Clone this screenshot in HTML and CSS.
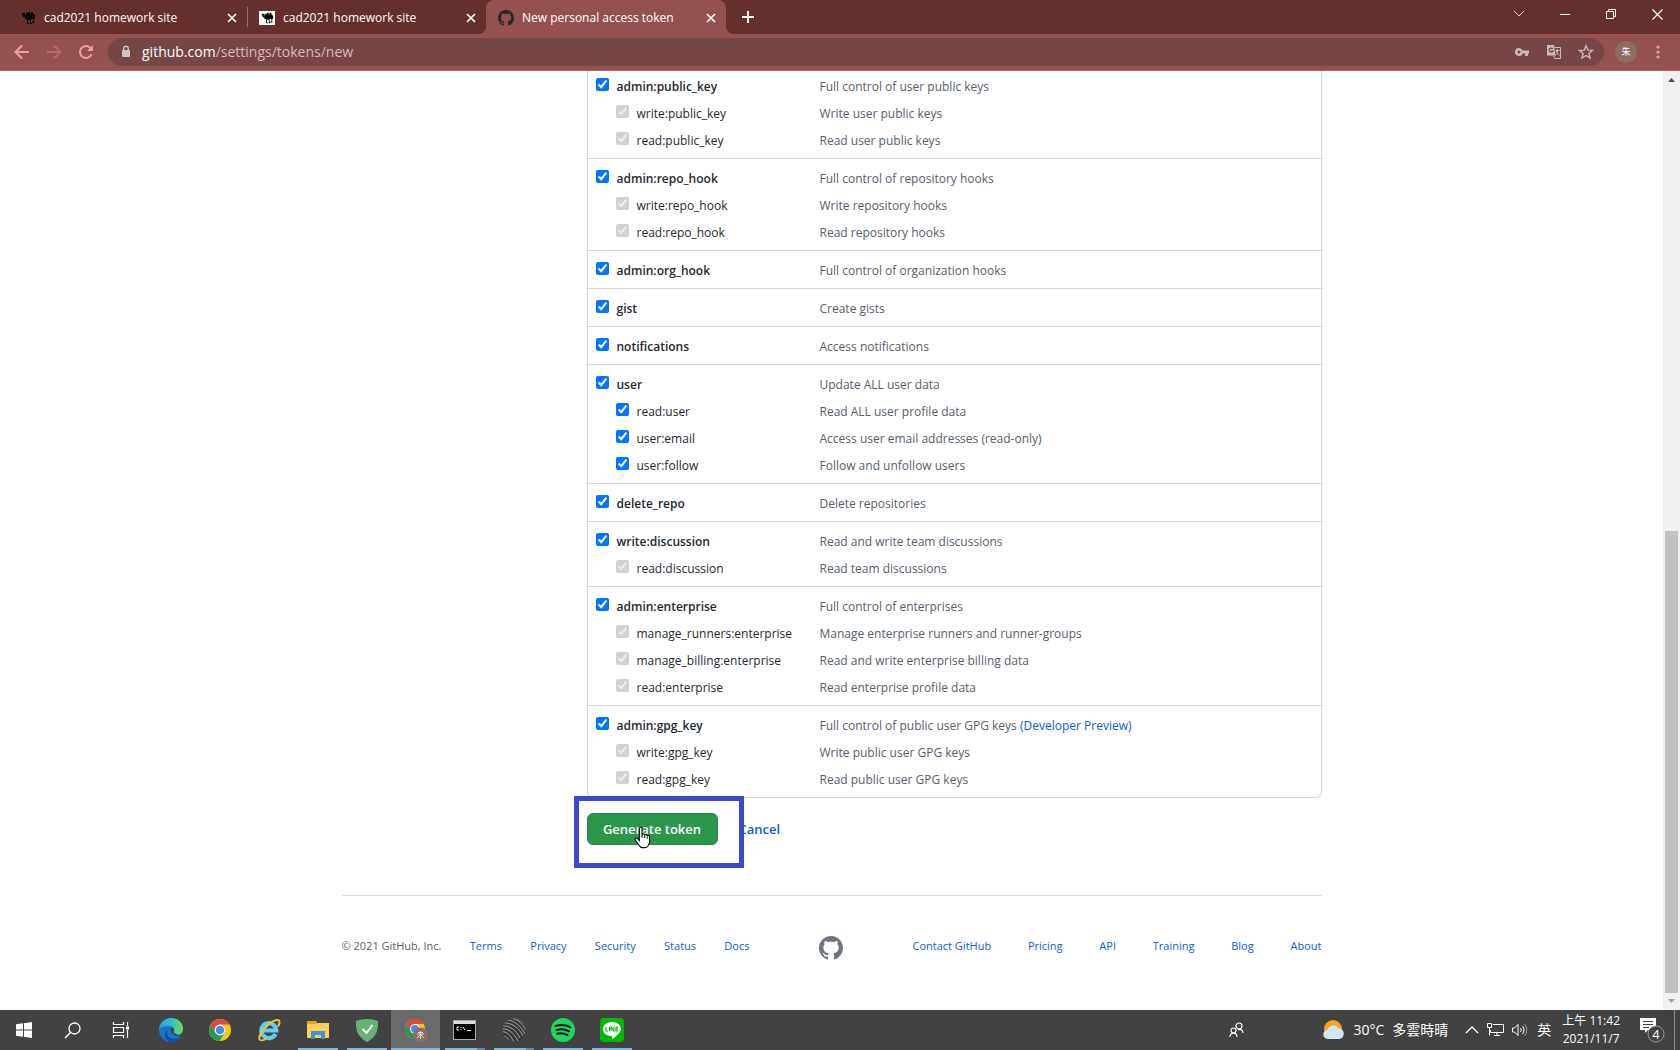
FILE: index.html
```html
<!DOCTYPE html>
<html lang="en">
<head>
<meta charset="utf-8">
<title>New personal access token</title>
<link rel="stylesheet" href="styles.css">
</head>
<body>
<svg class="defs" width="0" height="0" aria-hidden="true">
  <symbol id="octocat" viewBox="0 0 16 16"><path d="M8 0C3.58 0 0 3.58 0 8c0 3.54 2.29 6.53 5.47 7.59.4.07.55-.17.55-.38 0-.19-.01-.82-.01-1.49-2.01.37-2.53-.49-2.69-.94-.09-.23-.48-.94-.82-1.13-.28-.15-.68-.52-.01-.53.63-.01 1.08.58 1.23.82.72 1.21 1.87.87 2.33.66.07-.52.28-.87.51-1.07-1.78-.2-3.64-.89-3.64-3.95 0-.87.31-1.59.82-2.15-.08-.2-.36-1.02.08-2.12 0 0 .67-.21 2.2.82.64-.18 1.32-.27 2-.27s1.36.09 2 .27c1.53-1.04 2.2-.82 2.2-.82.44 1.1.16 1.92.08 2.12.51.56.82 1.27.82 2.15 0 3.07-1.87 3.75-3.65 3.95.29.25.54.73.54 1.48 0 1.07-.01 1.93-.01 2.2 0 .21.15.46.55.38A8.01 8.01 0 0 0 16 8c0-4.42-3.58-8-8-8z"/></symbol>
  <symbol id="camel" viewBox="0 0 16 16"><path d="M2 3h3v2h1V3h2V2h2v2h1V2h2v2h1v1h1v4h-1v4h-2v-1h1V9h-2v4h1v1h-2v-4H8v3h1v1H7V9H5V7H3V5H2z"/></symbol>
  <symbol id="close" viewBox="0 0 10 10"><path d="M1 1l8 8M9 1L1 9" stroke="currentColor" stroke-width="1.7" fill="none"/></symbol>
  <symbol id="chrome" viewBox="0 0 24 24"><circle cx="12" cy="12" r="11" fill="#fbc116"/><path d="M2.500 6.500A11 11 0 0 0 11.500 23L16.700 14.600 7.300 14.600z" fill="#1f9d58"/><path d="M2.500 6.500A11 11 0 0 1 21.600 6.600H12L7.300 14.600z" fill="#d94b3f"/><circle cx="12" cy="12" r="5.4" fill="#fff"/><circle cx="12" cy="12" r="4.3" fill="#4a8af4"/></symbol>
</svg>

<header class="browser">
  <div class="tab-strip">
    <div class="tab">
      <svg class="favicon" width="16" height="16"><use href="#camel"/></svg>
      <span class="tab-title">cad2021 homework site</span>
      <button class="tab-close" aria-label="Close tab"><svg width="10" height="10"><use href="#close"/></svg></button>
    </div>
    <div class="tab tab-divided">
      <svg class="favicon favicon-boxed" width="16" height="14"><use href="#camel"/></svg>
      <span class="tab-title">cad2021 homework site</span>
      <button class="tab-close" aria-label="Close tab"><svg width="10" height="10"><use href="#close"/></svg></button>
    </div>
    <div class="tab tab-active">
      <svg class="favicon" width="16" height="16" fill="#24292f"><use href="#octocat"/></svg>
      <span class="tab-title">New personal access token</span>
      <button class="tab-close" aria-label="Close tab"><svg width="10" height="10"><use href="#close"/></svg></button>
    </div>
    <button class="new-tab" aria-label="New tab"><svg width="12" height="12" viewBox="0 0 12 12"><path d="M6 0v12M0 6h12" stroke="#fff" stroke-width="2"/></svg></button>
    <div class="window-controls">
      <button aria-label="Search tabs"><svg width="12" height="8" viewBox="0 0 12 8"><path d="M1 1l5 5 5-5" stroke="#e6d5d5" fill="none"/></svg></button>
      <button aria-label="Minimize"><svg width="10" height="10" viewBox="0 0 10 10"><path d="M0 5.500h10" stroke="#fff"/></svg></button>
      <button aria-label="Restore"><svg width="10" height="10" viewBox="0 0 10 10"><path d="M.5 2.500h7v7h-7zM2.500 2.500v-2h7v7h-2" stroke="#fff" fill="none"/></svg></button>
      <button aria-label="Close window"><svg width="11" height="11" viewBox="0 0 11 11"><path d="M.5.5l10 10M10.500.5l-10 10" stroke="#fff" stroke-width="1.200"/></svg></button>
    </div>
  </div>
  <div class="toolbar">
    <button class="nav" aria-label="Back"><svg width="16" height="16" viewBox="0 0 16 16"><path d="M15 8H2M8 1.500L1.500 8 8 14.500" stroke="#f0a0a0" stroke-width="2" fill="none"/></svg></button>
    <button class="nav" aria-label="Forward"><svg width="16" height="16" viewBox="0 0 16 16"><path d="M1 8h13M8 1.500L14.500 8 8 14.500" stroke="#bb6b6b" stroke-width="2" fill="none"/></svg></button>
    <button class="nav" aria-label="Reload"><svg width="16" height="16" viewBox="0 0 16 16"><path d="M13.500 10.300A6 6 0 1 1 12.500 4" stroke="#f0a0a0" stroke-width="2" fill="none"/><path d="M15 1v6H9z" fill="#f0a0a0"/></svg></button>
    <div class="omnibox">
      <svg width="10" height="13" viewBox="0 0 10 13"><rect x="1" y="5" width="8" height="7" rx="1" fill="#cbc7cb"/><path d="M2.700 6V3.500a2.300 2.300 0 0 1 4.600 0V6" stroke="#cbc7cb" stroke-width="1.400" fill="none"/></svg>
      <div class="url" role="textbox" contenteditable="true" spellcheck="false" aria-label="Address">github.com<span class="url-path">/settings/tokens/new</span></div>
      <button aria-label="Passwords"><svg width="16" height="16" viewBox="0 0 16 16"><path d="M5 4a4 4 0 1 0 3.700 5.500H11V12h3V9.500h1v-3H8.700A4 4 0 0 0 5 4zm0 2.500a1.500 1.500 0 1 1 0 3 1.500 1.500 0 0 1 0-3z" fill="#c9bcbc" fill-rule="evenodd"/></svg></button>
      <button aria-label="Translate"><svg width="16" height="16" viewBox="0 0 16 16"><path d="M1 1h7l1.300 10.500H1z" fill="#c9bcbc"/><path d="M6.800 5A2 2 0 1 0 7 7H5" stroke="#764545" stroke-width="1.200" fill="none"/><path d="M8.500 3.500h6v11h-6l-1-3M9.500 6.500h4M11.500 5v1.500c0 2-1 4-2.500 5M10 7c1 2 2 3.500 3.500 4.500" stroke="#c9bcbc" fill="none"/></svg></button>
      <button aria-label="Bookmark"><svg width="16" height="16" viewBox="0 0 16 16"><path d="M8 1.700l1.800 4.400 4.700.3-3.600 3 1.200 4.600L8 11.500 3.900 14l1.200-4.600-3.600-3 4.700-.3z" stroke="#c9bcbc" stroke-width="1.400" fill="none"/></svg></button>
    </div>
    <button class="avatar" aria-label="Profile">朱</button>
    <button class="menu" aria-label="Menu"><svg width="4" height="14" viewBox="0 0 4 14"><g fill="#f0a0a0"><circle cx="2" cy="2" r="1.600"/><circle cx="2" cy="7" r="1.600"/><circle cx="2" cy="12" r="1.600"/></g></svg></button>
  </div>
</header>

<div class="viewport">
  <main class="page">
    <form class="token-form">
      <ul class="scopes">
        <li class="group">
          <div class="scope"><label><input type="checkbox" checked>admin:public_key</label><span>Full control of user public keys</span></div>
          <div class="scope sub"><label><input type="checkbox" checked disabled>write:public_key</label><span>Write user public keys</span></div>
          <div class="scope sub"><label><input type="checkbox" checked disabled>read:public_key</label><span>Read user public keys</span></div>
        </li>
        <li class="group">
          <div class="scope"><label><input type="checkbox" checked>admin:repo_hook</label><span>Full control of repository hooks</span></div>
          <div class="scope sub"><label><input type="checkbox" checked disabled>write:repo_hook</label><span>Write repository hooks</span></div>
          <div class="scope sub"><label><input type="checkbox" checked disabled>read:repo_hook</label><span>Read repository hooks</span></div>
        </li>
        <li class="group">
          <div class="scope"><label><input type="checkbox" checked>admin:org_hook</label><span>Full control of organization hooks</span></div>
        </li>
        <li class="group">
          <div class="scope"><label><input type="checkbox" checked>gist</label><span>Create gists</span></div>
        </li>
        <li class="group">
          <div class="scope"><label><input type="checkbox" checked>notifications</label><span>Access notifications</span></div>
        </li>
        <li class="group">
          <div class="scope"><label><input type="checkbox" checked>user</label><span>Update ALL user data</span></div>
          <div class="scope sub"><label><input type="checkbox" checked>read:user</label><span>Read ALL user profile data</span></div>
          <div class="scope sub"><label><input type="checkbox" checked>user:email</label><span>Access user email addresses (read-only)</span></div>
          <div class="scope sub"><label><input type="checkbox" checked>user:follow</label><span>Follow and unfollow users</span></div>
        </li>
        <li class="group">
          <div class="scope"><label><input type="checkbox" checked>delete_repo</label><span>Delete repositories</span></div>
        </li>
        <li class="group">
          <div class="scope"><label><input type="checkbox" checked>write:discussion</label><span>Read and write team discussions</span></div>
          <div class="scope sub"><label><input type="checkbox" checked disabled>read:discussion</label><span>Read team discussions</span></div>
        </li>
        <li class="group">
          <div class="scope"><label><input type="checkbox" checked>admin:enterprise</label><span>Full control of enterprises</span></div>
          <div class="scope sub"><label><input type="checkbox" checked disabled>manage_runners:enterprise</label><span>Manage enterprise runners and runner-groups</span></div>
          <div class="scope sub"><label><input type="checkbox" checked disabled>manage_billing:enterprise</label><span>Read and write enterprise billing data</span></div>
          <div class="scope sub"><label><input type="checkbox" checked disabled>read:enterprise</label><span>Read enterprise profile data</span></div>
        </li>
        <li class="group">
          <div class="scope"><label><input type="checkbox" checked>admin:gpg_key</label><span>Full control of public user GPG keys <a href="#preview">(Developer Preview)</a></span></div>
          <div class="scope sub"><label><input type="checkbox" checked disabled>write:gpg_key</label><span>Write public user GPG keys</span></div>
          <div class="scope sub"><label><input type="checkbox" checked disabled>read:gpg_key</label><span>Read public user GPG keys</span></div>
        </li>
      </ul>
      <div class="actions">
        <button class="generate" type="button">Generate token</button>
        <a class="cancel" href="#cancel">Cancel</a>
        <div class="highlight"></div>
        <svg class="pointer" width="17" height="23" viewBox="0 0 19 25"><path d="M6 2.500C6 .6 9 .6 9 2.500V9c.6-1 2.700-.8 3 .6.800-.8 2.400-.5 2.700.8 1-.7 2.800-.2 2.800 1.600v5c0 2-.8 3-1.500 4.300-.8 1.700-2 2.500-4 2.500H9.500c-2 0-3-1-4-2.700L1.500 15.300c-1-1.700 1-3 2.300-1.700L6 16z" fill="#fff" stroke="#000" stroke-width="1.200"/><path d="M9 9v4M12 10v3M14.800 11v3" stroke="#000"/></svg>
      </div>
    </form>
    <footer class="site-footer">
      <ul class="links">
        <li>© 2021 GitHub, Inc.</li>
        <li><a href="#terms">Terms</a></li>
        <li><a href="#privacy">Privacy</a></li>
        <li><a href="#security">Security</a></li>
        <li><a href="#status">Status</a></li>
        <li><a href="#docs">Docs</a></li>
      </ul>
      <a class="mark" href="#home" aria-label="GitHub"><svg width="24" height="24" fill="#6e7781"><use href="#octocat"/></svg></a>
      <ul class="links">
        <li><a href="#contact">Contact GitHub</a></li>
        <li><a href="#pricing">Pricing</a></li>
        <li><a href="#api">API</a></li>
        <li><a href="#training">Training</a></li>
        <li><a href="#blog">Blog</a></li>
        <li><a href="#about">About</a></li>
      </ul>
    </footer>
  </main>
  <div class="scrollbar" aria-hidden="true">
    <svg width="17" height="17" viewBox="0 0 17 17"><path d="M5 11l3.500-4 3.500 4z" fill="#505050"/></svg>
    <div class="track"><div class="thumb"></div></div>
    <svg width="17" height="17" viewBox="0 0 17 17"><path d="M5 6l3.500 4L12 6z" fill="#a3a3a3"/></svg>
  </div>
</div>

<div class="taskbar">
  <button class="sys" aria-label="Start"><svg width="16" height="16" viewBox="0 0 16 16"><path d="M0 2.300l7-1v6.200H0zM8 1.200L16 0v7.500H8zM0 8.500h7v6.200l-7-1zM8 8.500h8V16l-8-1.200z" fill="#fff"/></svg></button>
  <button class="sys" aria-label="Search"><svg width="17" height="17" viewBox="0 0 17 17"><circle cx="10.500" cy="6.500" r="5.500" stroke="#fff" stroke-width="1.300" fill="none"/><path d="M6.500 10.500L1 16" stroke="#fff" stroke-width="1.500"/></svg></button>
  <button class="sys" aria-label="Task view"><svg width="17" height="16" viewBox="0 0 17 16"><path d="M1.500 0v2.500h10V0M1.500 5.500h10v5h-10zM1.500 16v-2.500h10V16M15.500 0v4M15.500 8v8" stroke="#fff" stroke-width="1.200" fill="none"/><path d="M14 4.500h3v3h-3z" fill="#fff"/></svg></button>
  <div class="apps">
    <button class="app" aria-label="Edge"><svg width="24" height="24" viewBox="0 0 24 24"><defs><linearGradient id="eg" x1="0" x2="1"><stop offset="0" stop-color="#23a6dd"/><stop offset=".55" stop-color="#35c1c0"/><stop offset="1" stop-color="#6ede4e"/></linearGradient></defs><circle cx="12" cy="12" r="12" fill="#1376cc"/><path d="M0 11C1 4 6 0 12 0c7 0 12 5 12 10.500 0 4-3 6-6 6-3.500 0-4.500-1.300-3.500-2.500C16.500 11 14 8 10 8c-4 0-8 1-10 3z" fill="url(#eg)"/><path d="M8.500 12c-2 6 3 11.500 12 7.500-2 3-5 4.500-8.500 4.500C6 23 4 14 8.500 12z" fill="#0d4f9e"/><path d="M14.500 14c1.500-2.500 0-4-1.500-4-1.200 0-1.800.8-1.500 2 .4 3 3.500 5.800 7 5.800 1.800 0 4-.6 5.200-2.600l.3 1.300-2.500 3z" fill="#424242"/></svg></button>
    <button class="app" aria-label="Chrome"><svg width="24" height="24"><use href="#chrome"/></svg></button>
    <button class="app" aria-label="Internet Explorer"><svg width="24" height="24" viewBox="0 0 24 24"><path d="M18.500 16a7.500 7.500 0 1 1 .8-3.500H6" stroke="#62cdf7" stroke-width="4.200" fill="none"/><path d="M3 22C-1 18 14 1 21 2c2.500.6 1.500 4 0 6.500" stroke="#f3c32d" stroke-width="2" fill="none"/><path d="M3 22c2 1 5-.5 7-2" stroke="#f3c32d" stroke-width="1.800" fill="none"/></svg></button>
    <button class="app open" aria-label="File Explorer"><svg width="22" height="20" viewBox="0 0 22 20"><path d="M0 1h9l1 2h12v15H0z" fill="#fccf5b"/><path d="M0 1h9l1 3H0z" fill="#e7a417"/><path d="M4 19v-8h14v8h-4v-4H8v4z" fill="#3b93d9"/></svg></button>
    <button class="app open" aria-label="AdGuard"><svg width="22" height="23" viewBox="0 0 22 23"><path d="M11 0c4 0 8 .8 11 2 0 8 0 15-11 21C0 17 0 10 0 2 3 .8 7 0 11 0z" fill="#67b279"/><path d="M6.500 10l4 4 6-8" stroke="#fff" stroke-width="2" fill="none"/></svg></button>
    <button class="app open current" aria-label="Chrome, running"><svg width="24" height="26" viewBox="0 0 24 26"><use href="#chrome" width="22" height="24"/><circle cx="16.500" cy="18" r="7.500" fill="#8d6e63"/><path d="M13 17h7M16.500 14v8M14 15.500h5M16 18l-3 3M17 18l3 3" stroke="#ddd"/></svg></button>
    <button class="app open stacked" aria-label="Command Prompt"><svg width="24" height="20" viewBox="0 0 24 20"><rect x=".5" y=".5" width="22" height="19" fill="#000" stroke="#aaa"/><path d="M1 1h21v3H1z" fill="#dcdcdc"/><path d="M6 7H4v3h2M8 7v1M8 9v1M10 7l2 3M14 10.500h4" stroke="#fff" fill="none"/></svg></button>
    <button class="app open stacked" aria-label="Globe app"><svg width="24" height="24" viewBox="0 0 24 24"><clipPath id="ball"><circle cx="12" cy="12" r="11.500"/></clipPath><g clip-path="url(#ball)"><path d="M0 0h24v24H0z" fill="#383838"/><path d="M6 0c6-1 14 4 18 12M3 2c7-1 16 5 20 14M1 5c7-1 16 4 20 13M0 8c7-1 14 4 18 12M0 11c6-1 12 4 16 12M0 14c5-1 9 4 12 10M0 18c4 0 6 2 8 6M11 0c5 0 9 3 13 8" stroke="#aaa" fill="none"/></g></svg></button>
    <button class="app open" aria-label="Spotify"><svg width="24" height="24" viewBox="0 0 24 24"><circle cx="12" cy="12" r="12" fill="#1ed760"/><path d="M4.500 8c5-1.500 10.500-1 15 1.400M5.500 12c4.500-1.200 8.500-.8 12.500 1.300M6 15.700c3.500-1 7-.7 10.500 1.200" stroke="#151515" stroke-width="2" stroke-linecap="round" fill="none"/></svg></button>
    <button class="app open" aria-label="LINE"><svg width="24" height="24" viewBox="0 0 24 24"><rect width="24" height="24" rx="4" fill="#00b900"/><path d="M12 4c5 0 9 3 9 7 0 3.500-4 6.500-9 10.500.3-1.500.5-3-.5-3.500C6 18 3 15 3 11c0-4 4-7 9-7z" fill="#fff"/><path d="M6 9v4h2M9.500 9v4M11 13V9l3 4V9M18 9h-2v4h2M16 11h2" stroke="#00b900" stroke-width="1.100" fill="none"/></svg></button>
  </div>
  <div class="tray">
    <svg class="people" width="15" height="16" viewBox="0 0 15 16"><g fill="none" stroke="#fff" stroke-width="1.200"><circle cx="10" cy="4" r="3"/><circle cx="4.500" cy="8.500" r="2.500"/><path d="M1 15c0-5 7-5 7 0M9 8c3-1.500 5 .5 5 3"/></g></svg>
    <div class="weather">
      <svg width="22" height="22" viewBox="0 0 22 22"><circle cx="10" cy="10" r="9" fill="#f8a51f"/><path d="M5 20a4.500 4.500 0 0 1-.5-9 6 6 0 0 1 11-1.500A5.300 5.300 0 0 1 16.500 20z" fill="#cfe6fb"/></svg>
      <span>30°C</span>
      <span>多雲時晴</span>
    </div>
    <div class="indicators">
      <svg width="14" height="8" viewBox="0 0 14 8"><path d="M1 7l6-6 6 6" stroke="#fff" stroke-width="1.300" fill="none"/></svg>
      <svg width="17" height="14" viewBox="0 0 17 14"><path d="M6 1.500h10.500v8H3.500V7M7 12.500h6M10 10v2.500M.5.500h4v4h-4zM2.500 5v7.500" stroke="#fff" fill="none"/></svg>
      <svg width="17" height="14" viewBox="0 0 17 14"><path d="M.5 5v4h2L6 12.500v-11L2.500 5zM8.500 5a3 3 0 0 1 0 4M10.500 3a6 6 0 0 1 0 8" stroke="#fff" fill="none"/><path d="M12.500 1a9 9 0 0 1 0 12" stroke="#999" fill="none"/></svg>
      <span class="ime">英</span>
    </div>
    <time class="clock"><span>上午 11:42</span><span>2021/11/7</span></time>
    <svg class="notices" width="25" height="26" viewBox="0 0 25 26"><path d="M0 1h16v12H8l-3 3v-3H0z" fill="#fff"/><path d="M3 4.500h10M3 7.500h10M3 10.500h6" stroke="#424242"/><circle cx="16" cy="17" r="8" fill="#424242" stroke="#999"/><text x="16" y="22" text-anchor="middle" class="badge">4</text></svg>
  </div>
</div>
</body>
</html>
```
FILE: styles.css
```css
* { box-sizing: border-box; }

body {
  display: flex;
  flex-direction: column;
  min-height: 100vh;
  margin: 0;
  background: #fff;
  color: #24292f;
  font: 12px/18px "Open Sans", "Noto Sans", "Noto Sans CJK TC", sans-serif;
}

button {
  display: flex;
  align-items: center;
  justify-content: center;
  padding: 0;
  border: 0;
  background: none;
  color: inherit;
  font: inherit;
}

ul { margin: 0; padding: 0; list-style: none; }
a { color: #0b60d6; text-decoration: none; }
svg { display: block; flex: none; }
.defs { position: absolute; }

/* Browser window */
.tab-strip {
  display: flex;
  height: 34px;
  padding-left: 8px;
  background: #672e2e;
  color: #fff;
}

.tab {
  display: flex;
  align-items: center;
  width: 239px;
  padding: 1px 7px 0 12px;
}

.tab-divided { background: linear-gradient(#9c6f6f, #9c6f6f) 0 7px / 1px 20px no-repeat; }
.tab-active {
  position: relative;
  width: 240px;
  border-radius: 8px 8px 0 0;
  background: #955151;
}

/* Flared feet of the active tab */
.tab-active::before,
.tab-active::after {
  position: absolute;
  bottom: 0;
  width: 8px;
  height: 8px;
  content: "";
}

.tab-active::before { right: 100%; background: radial-gradient(circle at 0 0, transparent 8px, #955151 8px); }
.tab-active::after { left: 100%; background: radial-gradient(circle at 100% 0, transparent 8px, #955151 8px); }
.favicon-boxed { background: #fff; }
.tab-title { flex: 1; margin-left: 8px; white-space: nowrap; }
.tab-close { width: 16px; height: 16px; }
.new-tab { width: 44px; }
.window-controls { display: flex; margin-left: auto; }
.window-controls button { width: 46px; height: 28px; }

.toolbar {
  display: flex;
  align-items: center;
  height: 37px;
  padding: 0 8px 1px 6px;
  border-bottom: 1px solid #b06464;
  background: #955151;
}

.nav { width: 32px; height: 28px; }

.omnibox {
  display: flex;
  flex: 1;
  align-items: center;
  height: 28px;
  margin: 0 11px 0 6px;
  padding: 0 2px 0 13px;
  border-radius: 14px;
  background: #764545;
}

.omnibox button { width: 32px; height: 28px; }
.url { flex: 1; margin-left: 11px; color: #fff; font-size: 14px; line-height: 20px; }
.url-path { color: #d3bcbc; }

.avatar {
  width: 22px;
  height: 22px;
  border-radius: 50%;
  background: #8d6e63;
  color: #fff;
  font-size: 9px;
}

.menu { width: 28px; height: 28px; margin-left: 7px; }

/* Page area with its scrollbar */
.viewport { display: flex; flex: 1; }
.page { flex: 1; width: 100%; max-width: 980px; margin: 0 auto; }

.scrollbar {
  display: flex;
  flex-direction: column;
  width: 17px;
  background: #f1f1f1;
}

.track { display: flex; flex: 1; flex-direction: column; justify-content: flex-end; }
.thumb { height: 51%; margin: 0 2px; background: #c1c1c1; }

.token-form { margin-left: 25%; }

.scopes {
  border: 1px solid #d0d7de;
  border-top: 0;
  border-radius: 0 0 6px 6px;
}

.group { margin: 0 -2px; padding: 6px 10px 4px; }
.group:first-child { padding-top: 2px; }
.group + .group { border-top: 1px solid #d0d7de; }

.scope {
  display: grid;
  grid-template-columns: 224px 1fr;
  align-items: center;
  height: 27px;
  color: #57606a;
}

.scope label { display: flex; align-items: center; gap: 8px; color: #24292f; font-weight: 600; }
.scope.sub label { padding-left: 20px; font-weight: 400; }
.scope input { width: 13px; height: 13px; margin: 0 0 5px; }

.actions {
  position: relative;
  display: flex;
  align-items: center;
  gap: 21px;
  padding: 15px 0 50px;
}

.generate {
  width: 131px;
  height: 32px;
  border: 1px solid #2a8444;
  border-radius: 6px;
  background: #2c974b;
  color: #fff;
  font-size: 13px;
  font-weight: 600;
}

.cancel { font-size: 13px; font-weight: 600; }

.highlight {
  position: absolute;
  top: -2px;
  left: -13px;
  width: 170px;
  height: 72px;
  border: 5px solid #3f48cc;
}

.pointer { position: absolute; top: 28px; left: 47px; }

.site-footer {
  display: grid;
  grid-template-columns: 408px 1fr 409px;
  align-items: center;
  padding: 40px 0;
  border-top: 1px solid #d8dee4;
  color: #57606a;
  font-size: 11px;
}

.links { display: flex; justify-content: space-between; padding-bottom: 4px; white-space: nowrap; }
.mark { justify-self: center; }

/* Taskbar */
.taskbar {
  display: flex;
  height: 40px;
  background: #424242;
  color: #fff;
}

.sys { width: 48px; }
.apps { display: flex; margin-left: 2px; }
.app { width: 49px; }
.open { background: linear-gradient(#76b9ed, #76b9ed) 50% 100% / 40px 2px no-repeat; }
.stacked { background-image: linear-gradient(90deg, #76b9ed 80%, #5a8ab5 80%); }
.current { background-color: #6a6a6a; background-size: 100% 2px; }

.tray {
  display: flex;
  align-items: center;
  margin-left: auto;
  padding-right: 4px;
  font-size: 14px;
}

/* Thin divider of the show-desktop strip */
.taskbar::after { width: 5px; border-left: 1px solid #8a8a8a; content: ""; }

.people { margin-right: 79px; }
.weather { display: flex; align-items: center; gap: 8px; margin-right: 17px; }
.indicators { display: flex; align-items: center; gap: 8px; margin-right: 11px; }
.clock { display: flex; flex-direction: column; align-items: center; margin-right: 20px; font-size: 12px; }
.notices { margin-right: 5px; }
.badge { fill: #fff; font-size: 13px; }
```
